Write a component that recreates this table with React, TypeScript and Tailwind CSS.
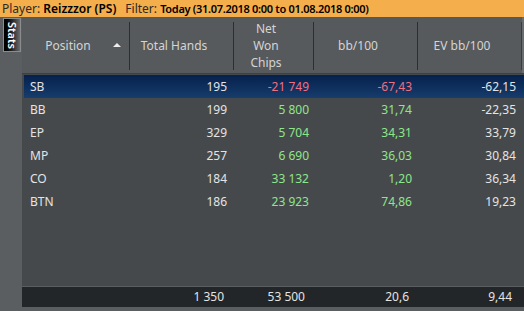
import type { ReactNode } from "react";

type row = {
    pos: string;
    hands: string;
    chips: string;
    bb: string;
    ev: string;
    neg?: boolean;
};

const rows: row[] = [
    { pos: "SB", hands: "195", chips: "-21 749", bb: "-67,43", ev: "-62,15", neg: true },
    { pos: "BB", hands: "199", chips: "5 800", bb: "31,74", ev: "-22,35" },
    { pos: "EP", hands: "329", chips: "5 704", bb: "34,31", ev: "33,79" },
    { pos: "MP", hands: "257", chips: "6 690", bb: "36,03", ev: "30,84" },
    { pos: "CO", hands: "184", chips: "33 132", bb: "1,20", ev: "36,34" },
    { pos: "BTN", hands: "186", chips: "23 923", bb: "74,86", ev: "19,23" },
];

const cols = "grid grid-cols-[108px_104px_80px_104px_104px_2px]";

const HeadCell = ({ children, last }: { children: ReactNode; last?: boolean }) => (
    <div className="relative flex items-center justify-center pr-4 text-center leading-[17px]">
        {children}
        <span className={`absolute right-0 top-[5px] bottom-[3px] w-px ${last ? "bg-[#3a3d40]" : "bg-[#2c2e30]"}`} />
    </div>
);

const App = () => {
    return (
        <div
            className="w-[524px] h-[311px] flex flex-col bg-[#5b5e61] overflow-hidden text-[12px]"
            style={{ fontFamily: '"Noto Sans", "Open Sans", sans-serif' }}
        >
            <div className="h-[17px] bg-[#f4ae4c] text-[#2d2a24] px-[2px] leading-[17px] whitespace-nowrap">
                Player: <span className="font-semibold text-black">Reizzzor (PS)</span>
                <span className="ml-[9px]">Filter: </span>
                <span className="font-semibold text-black text-[11px] tracking-[-0.3px]">
                    Today (31.07.2018 0:00 to 01.08.2018 0:00)
                </span>
            </div>
            <div className="flex flex-1">
                <div className="w-[22px] shrink-0 pt-[1px] pl-[3px]">
                    <div className="w-[18px] h-[34px] border border-[#8a8c8e] bg-gradient-to-r from-black to-[#6a6c6e] flex items-center justify-center">
                        <span className="text-white text-[11px] font-semibold [writing-mode:vertical-rl] leading-none">
                            Stats
                        </span>
                    </div>
                </div>
                <div className="flex-1 flex flex-col">
                    <div className={`${cols} h-[57px] bg-[#575a5d] text-[#d4d4d4] border-b border-[#3e4144]`}>
                        <HeadCell>
                            Position
                            <span className="absolute right-[9px] top-[26px] w-0 h-0 border-x-[4px] border-x-transparent border-b-[4px] border-b-[#eeeeee]" />
                        </HeadCell>
                        <HeadCell>Total Hands</HeadCell>
                        <HeadCell>
                            Net
                            <br />
                            Won
                            <br />
                            Chips
                        </HeadCell>
                        <HeadCell>bb/100</HeadCell>
                        <HeadCell last>EV bb/100</HeadCell>
                        <div className="bg-[#6a6d70]" />
                    </div>
                    <div className="flex-1 bg-[#46494c] pt-[1px] pl-[2px]">
                        {rows.map((r) => (
                            <div
                                key={r.pos}
                                className={`${cols} h-[23px] items-center ${
                                    r.neg ? "bg-gradient-to-b from-[#07204d] to-[#163d6c]" : ""
                                }`}
                            >
                                <div className="pl-[6px] text-[#e4e4e4]">{r.pos}</div>
                                <div className="text-right pr-[9px] text-[#e4e4e4]">{r.hands}</div>
                                <div className={`text-right pr-[7px] ${r.neg ? "text-[#f06f80]" : "text-[#8ee68a]"}`}>
                                    {r.chips}
                                </div>
                                <div className={`text-right pr-[8px] ${r.neg ? "text-[#f06f80]" : "text-[#8ee68a]"}`}>
                                    {r.bb}
                                </div>
                                <div className="text-right pr-[8px] text-[#e4e4e4]">{r.ev}</div>
                            </div>
                        ))}
                    </div>
                    <div className="h-px bg-[#5a5e61]" />
                    <div className={`${cols} h-[20px] bg-[#222629] text-[#e4e4e4] items-center`}>
                        <div />
                        <div className="text-right pr-[10px]">1 350</div>
                        <div className="text-right pr-[9px]">53 500</div>
                        <div className="text-right pr-[9px]">20,6</div>
                        <div className="text-right pr-[10px]">9,44</div>
                    </div>
                    <div className="h-[4px]" />
                </div>
            </div>
        </div>
    );
};

export default App;
